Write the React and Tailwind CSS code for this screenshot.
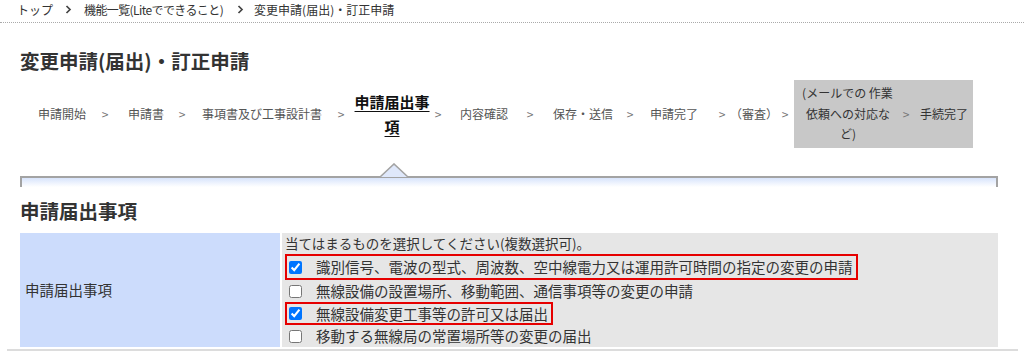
import React from "react";

const font = { fontFamily: '"Noto Sans CJK JP", "Noto Sans", sans-serif' };

const Crumb = ({ className = "mx-[12px]" }) => (
  <svg width="7" height="9" viewBox="0 0 7 9" className={className}>
    <path d="M1.5 1 L5 4.5 L1.5 8" fill="none" stroke="#444" strokeWidth="1.7" />
  </svg>
);

const Sep = ({ className = "" }) => (
  <span className={"w-[8px] text-center text-[#777] " + className}>&gt;</span>
);

const options = [
  { label: "識別信号、電波の型式、周波数、空中線電力又は運用許可時間の指定の変更の申請", checked: true, boxed: true, h: "h-[26px]" },
  { label: "無線設備の設置場所、移動範囲、通信事項等の変更の申請", checked: false, boxed: false, h: "h-[22px]" },
  { label: "無線設備変更工事等の許可又は届出", checked: true, boxed: true, h: "h-[23px]" },
  { label: "移動する無線局の常置場所等の変更の届出", checked: false, boxed: false, h: "h-[22px]" },
];

export default function App() {
  return (
    <div className="w-[1024px] h-[357px] bg-white overflow-hidden text-[#333]" style={font}>
      {/* breadcrumb */}
      <div className="h-[23px] border-b border-dotted border-[#aaa] flex items-center pl-[17px] text-[12px] text-[#333] pb-[3px]">
        <span>トップ</span>
        <Crumb />
        <span className="tracking-[-0.6px]">機能一覧(Liteでできること)</span>
        <Crumb className="ml-[14px] mr-[10px]" />
        <span>変更申請(届出)・訂正申請</span>
      </div>

      <h1 className="mt-[24px] ml-[20px] h-[28px] leading-[28px] text-[19.5px] font-bold text-[#333]">
        変更申請(届出)・訂正申請
      </h1>

      {/* steps */}
      <div className="mt-[5px] ml-[20px] h-[68px] flex items-center text-[12px] text-[#555]">
        <span className="ml-[18px]">申請開始</span>
        <Sep className="ml-[15px]" />
        <span className="ml-[19px]">申請書</span>
        <Sep className="ml-[14px]" />
        <span className="ml-[16px]">事項書及び工事設計書</span>
        <Sep className="ml-[15px]" />
        <span className="ml-[9px] w-[76px] text-center text-[15px] font-bold text-[#111] underline underline-offset-[3px] leading-[25px]">
          申請届出事項
        </span>
        <Sep className="ml-[4px]" />
        <span className="ml-[18px]">内容確認</span>
        <Sep className="ml-[18px]" />
        <span className="ml-[19px]">保存・送信</span>
        <Sep className="ml-[13px]" />
        <span className="ml-[16px]">申請完了</span>
        <Sep className="ml-[20px]" />
        <span className="ml-[4px]">（審査）</span>
        <Sep className="ml-[3px]" />
        <div className="ml-[5px] w-[179px] h-[68px] bg-[#c8c8c8] flex items-center text-[#333]">
          <div className="ml-[8px] w-[92px] text-center leading-[20.5px]">
            <div className="text-left">(メールでの 作業</div>
            <div>依頼への対応な</div>
            <div>ど)</div>
          </div>
          <Sep className="ml-[8px]" />
          <span className="ml-[10px]">手続完了</span>
        </div>
      </div>

      {/* panel top */}
      <div className="relative mt-[28px] ml-[20px] w-[978px] h-[11px] border-t-2 border-x-2 border-[#a3a3a3] bg-gradient-to-b from-[#d8e4fb] to-white">
        <svg width="28" height="15" viewBox="0 0 28 15" className="absolute left-[358px] top-[-15px]">
          <path d="M0 14 L14 1 L28 14" fill="#dfe8fb" stroke="#a3a3a3" strokeWidth="1.6" />
        </svg>
      </div>

      <h2 className="mt-[12px] ml-[20px] h-[24px] leading-[24px] text-[19.5px] font-bold text-[#333]">
        申請届出事項
      </h2>

      {/* table */}
      <div className="mt-[10px] ml-[20px] w-[978px] h-[114px] grid grid-cols-[260px_1fr] gap-x-[2px]">
        <div className="bg-[#ccdcfc] flex items-center pl-[5px] text-[14.5px] text-[#333]">申請届出事項</div>
        <div className="bg-[#e6e6e6] pl-[3px] flex flex-col items-start">
          <div className="h-[21px] leading-[21px] text-[13.5px] text-[#333]">当てはまるものを選択してください(複数選択可)。</div>
          {options.map((o) => (
            <label
              key={o.label}
              className={
                "flex items-center border-2 pr-[3px] text-[14.5px] text-[#333] " +
                o.h +
                (o.boxed ? " border-[#e60000]" : " border-transparent")
              }
            >
              <input type="checkbox" defaultChecked={o.checked} className="m-0 ml-[2px] w-[13px] h-[13px]" />
              <span className="ml-[14px]">{o.label}</span>
            </label>
          ))}
        </div>
      </div>

      <div className="mt-[2px] ml-[7px] w-[1011px] h-[2px] bg-[#dcdcdc]" />
    </div>
  );
}
